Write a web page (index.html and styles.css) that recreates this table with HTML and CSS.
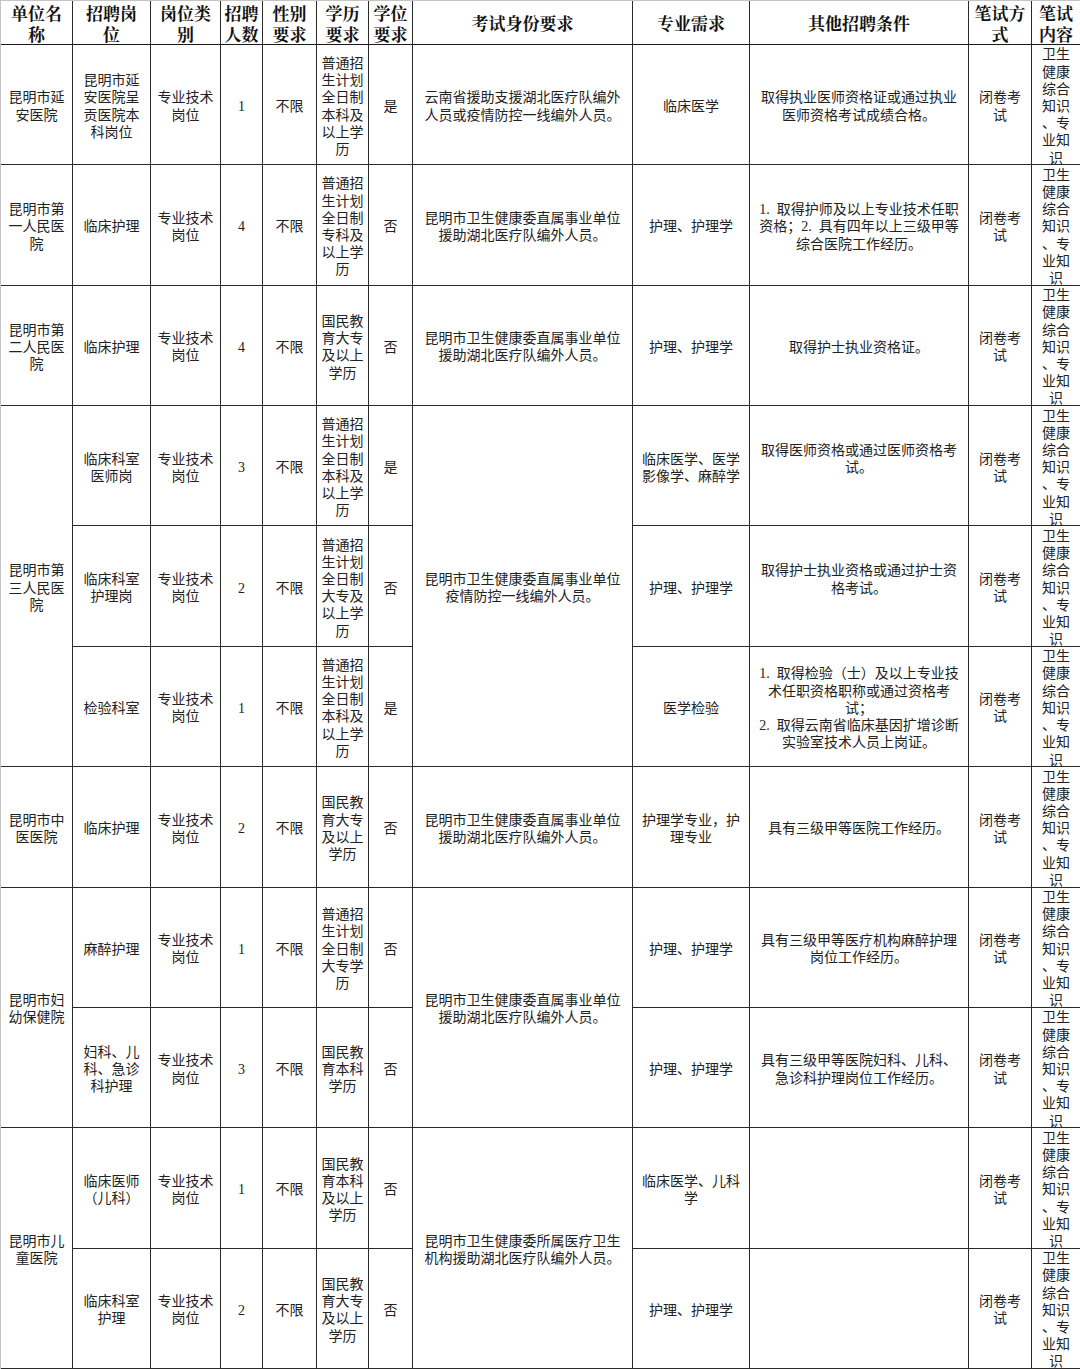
FILE: index.html
```html
<!DOCTYPE html>
<html lang="zh-CN">
<head>
<meta charset="utf-8">
<title>招聘岗位表</title>
<link rel="stylesheet" href="styles.css">
</head>
<body>
<div class="sheet">
  <div class="cell hd">单位名<br>称</div>
  <div class="cell hd">招聘岗<br>位</div>
  <div class="cell hd">岗位类<br>别</div>
  <div class="cell hd">招聘<br>人数</div>
  <div class="cell hd">性别<br>要求</div>
  <div class="cell hd">学历<br>要求</div>
  <div class="cell hd">学位<br>要求</div>
  <div class="cell hd">考试身份要求</div>
  <div class="cell hd">专业需求</div>
  <div class="cell hd">其他招聘条件</div>
  <div class="cell hd">笔试方<br>式</div>
  <div class="cell hd end">笔试<br>内容</div>

  <!-- row 1 -->
  <div class="cell">昆明市延<br>安医院</div>
  <div class="cell">昆明市延<br>安医院呈<br>贡医院本<br>科岗位</div>
  <div class="cell">专业技术<br>岗位</div>
  <div class="cell">1</div>
  <div class="cell">不限</div>
  <div class="cell">普通招<br>生计划<br>全日制<br>本科及<br>以上学<br>历</div>
  <div class="cell">是</div>
  <div class="cell">云南省援助支援湖北医疗队编外<br>人员或疫情防控一线编外人员。</div>
  <div class="cell">临床医学</div>
  <div class="cell">取得执业医师资格证或通过执业<br>医师资格考试成绩合格。</div>
  <div class="cell">闭卷考<br>试</div>
  <div class="cell end">卫生<br>健康<br>综合<br>知识<br>、专<br>业知<br>识</div>

  <!-- row 2 -->
  <div class="cell">昆明市第<br>一人民医<br>院</div>
  <div class="cell">临床护理</div>
  <div class="cell">专业技术<br>岗位</div>
  <div class="cell">4</div>
  <div class="cell">不限</div>
  <div class="cell">普通招<br>生计划<br>全日制<br>专科及<br>以上学<br>历</div>
  <div class="cell">否</div>
  <div class="cell">昆明市卫生健康委直属事业单位<br>援助湖北医疗队编外人员。</div>
  <div class="cell">护理、护理学</div>
  <div class="cell">1.&ensp;取得护师及以上专业技术任职<br>资格；2.&ensp;具有四年以上三级甲等<br>综合医院工作经历。</div>
  <div class="cell">闭卷考<br>试</div>
  <div class="cell end">卫生<br>健康<br>综合<br>知识<br>、专<br>业知<br>识</div>

  <!-- row 3 -->
  <div class="cell">昆明市第<br>二人民医<br>院</div>
  <div class="cell">临床护理</div>
  <div class="cell">专业技术<br>岗位</div>
  <div class="cell">4</div>
  <div class="cell">不限</div>
  <div class="cell">国民教<br>育大专<br>及以上<br>学历</div>
  <div class="cell">否</div>
  <div class="cell">昆明市卫生健康委直属事业单位<br>援助湖北医疗队编外人员。</div>
  <div class="cell">护理、护理学</div>
  <div class="cell">取得护士执业资格证。</div>
  <div class="cell">闭卷考<br>试</div>
  <div class="cell end">卫生<br>健康<br>综合<br>知识<br>、专<br>业知<br>识</div>

  <!-- rows 4-6 -->
  <div class="cell span3">昆明市第<br>三人民医<br>院</div>
  <div class="cell">临床科室<br>医师岗</div>
  <div class="cell">专业技术<br>岗位</div>
  <div class="cell">3</div>
  <div class="cell">不限</div>
  <div class="cell">普通招<br>生计划<br>全日制<br>本科及<br>以上学<br>历</div>
  <div class="cell">是</div>
  <div class="cell span3">昆明市卫生健康委直属事业单位<br>疫情防控一线编外人员。</div>
  <div class="cell">临床医学、医学<br>影像学、麻醉学</div>
  <div class="cell lift">取得医师资格或通过医师资格考<br>试。</div>
  <div class="cell">闭卷考<br>试</div>
  <div class="cell end">卫生<br>健康<br>综合<br>知识<br>、专<br>业知<br>识</div>

  <div class="cell">临床科室<br>护理岗</div>
  <div class="cell">专业技术<br>岗位</div>
  <div class="cell">2</div>
  <div class="cell">不限</div>
  <div class="cell">普通招<br>生计划<br>全日制<br>大专及<br>以上学<br>历</div>
  <div class="cell">否</div>
  <div class="cell">护理、护理学</div>
  <div class="cell lift">取得护士执业资格或通过护士资<br>格考试。</div>
  <div class="cell">闭卷考<br>试</div>
  <div class="cell end">卫生<br>健康<br>综合<br>知识<br>、专<br>业知<br>识</div>

  <div class="cell">检验科室</div>
  <div class="cell">专业技术<br>岗位</div>
  <div class="cell">1</div>
  <div class="cell">不限</div>
  <div class="cell">普通招<br>生计划<br>全日制<br>本科及<br>以上学<br>历</div>
  <div class="cell">是</div>
  <div class="cell">医学检验</div>
  <div class="cell">1.&ensp;取得检验（士）及以上专业技<br>术任职资格职称或通过资格考<br>试；<br>2.&ensp;取得云南省临床基因扩增诊断<br>实验室技术人员上岗证。</div>
  <div class="cell">闭卷考<br>试</div>
  <div class="cell end">卫生<br>健康<br>综合<br>知识<br>、专<br>业知<br>识</div>

  <!-- row 7 -->
  <div class="cell">昆明市中<br>医医院</div>
  <div class="cell">临床护理</div>
  <div class="cell">专业技术<br>岗位</div>
  <div class="cell">2</div>
  <div class="cell">不限</div>
  <div class="cell">国民教<br>育大专<br>及以上<br>学历</div>
  <div class="cell">否</div>
  <div class="cell">昆明市卫生健康委直属事业单位<br>援助湖北医疗队编外人员。</div>
  <div class="cell">护理学专业，护<br>理专业</div>
  <div class="cell">具有三级甲等医院工作经历。</div>
  <div class="cell">闭卷考<br>试</div>
  <div class="cell end">卫生<br>健康<br>综合<br>知识<br>、专<br>业知<br>识</div>

  <!-- rows 8-9 -->
  <div class="cell span2">昆明市妇<br>幼保健院</div>
  <div class="cell">麻醉护理</div>
  <div class="cell">专业技术<br>岗位</div>
  <div class="cell">1</div>
  <div class="cell">不限</div>
  <div class="cell">普通招<br>生计划<br>全日制<br>大专学<br>历</div>
  <div class="cell">否</div>
  <div class="cell span2">昆明市卫生健康委直属事业单位<br>援助湖北医疗队编外人员。</div>
  <div class="cell">护理、护理学</div>
  <div class="cell">具有三级甲等医疗机构麻醉护理<br>岗位工作经历。</div>
  <div class="cell">闭卷考<br>试</div>
  <div class="cell end">卫生<br>健康<br>综合<br>知识<br>、专<br>业知<br>识</div>

  <div class="cell">妇科、儿<br>科、急诊<br>科护理</div>
  <div class="cell">专业技术<br>岗位</div>
  <div class="cell">3</div>
  <div class="cell">不限</div>
  <div class="cell">国民教<br>育本科<br>学历</div>
  <div class="cell">否</div>
  <div class="cell">护理、护理学</div>
  <div class="cell">具有三级甲等医院妇科、儿科、<br>急诊科护理岗位工作经历。</div>
  <div class="cell">闭卷考<br>试</div>
  <div class="cell end">卫生<br>健康<br>综合<br>知识<br>、专<br>业知<br>识</div>

  <!-- rows 10-11 -->
  <div class="cell span2">昆明市儿<br>童医院</div>
  <div class="cell">临床医师<br>（儿科）</div>
  <div class="cell">专业技术<br>岗位</div>
  <div class="cell">1</div>
  <div class="cell">不限</div>
  <div class="cell">国民教<br>育本科<br>及以上<br>学历</div>
  <div class="cell">否</div>
  <div class="cell span2">昆明市卫生健康委所属医疗卫生<br>机构援助湖北医疗队编外人员。</div>
  <div class="cell">临床医学、儿科<br>学</div>
  <div class="cell"></div>
  <div class="cell">闭卷考<br>试</div>
  <div class="cell end">卫生<br>健康<br>综合<br>知识<br>、专<br>业知<br>识</div>

  <div class="cell">临床科室<br>护理</div>
  <div class="cell">专业技术<br>岗位</div>
  <div class="cell">2</div>
  <div class="cell">不限</div>
  <div class="cell">国民教<br>育大专<br>及以上<br>学历</div>
  <div class="cell">否</div>
  <div class="cell">护理、护理学</div>
  <div class="cell"></div>
  <div class="cell">闭卷考<br>试</div>
  <div class="cell end">卫生<br>健康<br>综合<br>知识<br>、专<br>业知<br>识</div>
</div>
</body>
</html>
```

FILE: styles.css
```css
html, body {
  margin: 0;
  padding: 0;
  background: #ffffff;
}

.sheet {
  box-sizing: border-box;
  width: 1080px;
  height: 1369px;
  display: grid;
  grid-template-columns: 72px 78px 70px 42px 54px 52px 44px 220px 117px 219px 63px 48px;
  grid-template-rows: 44px repeat(11, minmax(0, 1fr));
  border-top: 1px solid #c4c4c4;
  border-left: 1px solid #c4c4c4;
  font-family: "Liberation Serif", "Noto Sans CJK SC", sans-serif;
  font-size: 14px;
  line-height: 17.2px;
  color: #222222;
}

.cell {
  box-sizing: border-box;
  min-height: 0;
  min-width: 0;
  border-right: 1px solid #2a2a2a;
  border-bottom: 1px solid #2a2a2a;
  display: flex;
  align-items: center;
  justify-content: center;
  text-align: center;
  white-space: nowrap;
  padding: 4px 1px 0;
}

.end {
  border-right: none;
}

.hd {
  font-family: "Liberation Serif", "Noto Serif CJK SC", "Noto Sans CJK SC", serif;
  font-weight: 700;
  font-size: 17px;
  line-height: 21.5px;
  color: #111111;
  border-bottom-color: #1a1a1a;
  padding-top: 5px;
}

.span2 {
  grid-row: span 2;
}

.span3 {
  grid-row: span 3;
}

.lift {
  padding-bottom: 17px;
}
```
